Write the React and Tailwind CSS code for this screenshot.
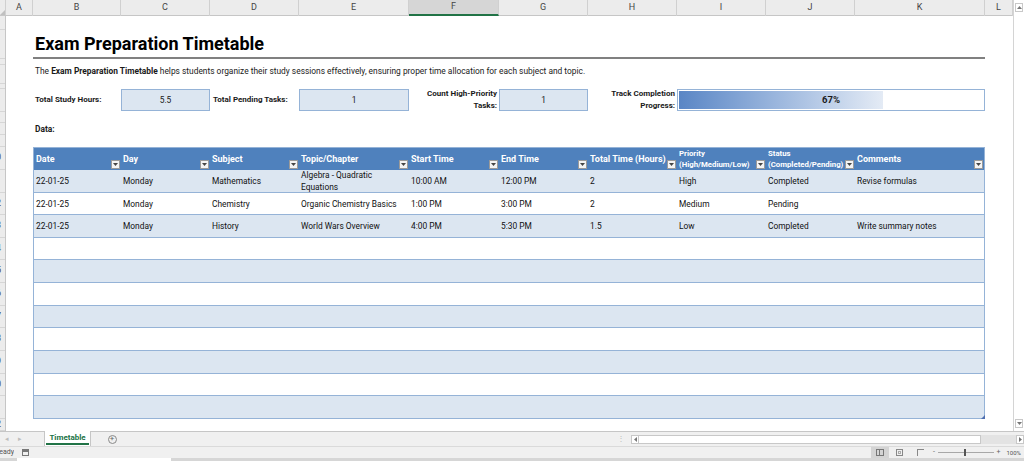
import React from "react";

const letters = ["A", "B", "C", "D", "E", "F", "G", "H", "I", "J", "K", "L"];

// row header heights (rows 1..22), written out so tailwind sees them
const rowHeights = [
  "h-[14px]", "h-[29px]", "h-[6px]", "h-[19px]", "h-[5px]", "h-[23px]", "h-[11px]", "h-[12px]", "h-[12px]",
  "h-[23px]",
  "h-[23px]", "h-[22px]", "h-[23px]", "h-[22px]", "h-[23px]", "h-[23px]", "h-[22px]", "h-[23px]", "h-[23px]", "h-[22px]", "h-[23px]",
  "h-[12px]",
];

const dataRowHeights = [
  "h-[23px]", "h-[22px]", "h-[23px]", "h-[22px]", "h-[23px]", "h-[23px]", "h-[22px]", "h-[23px]", "h-[23px]", "h-[22px]", "h-[23px]",
];

const headers = [
  ["Date"],
  ["Day"],
  ["Subject"],
  ["Topic/Chapter"],
  ["Start Time"],
  ["End Time"],
  ["Total Time (Hours)"],
  ["Priority", "(High/Medium/Low)"],
  ["Status", "(Completed/Pending)"],
  ["Comments"],
];

const rows = [
  ["22-01-25", "Monday", "Mathematics", "Algebra - Quadratic\nEquations", "10:00 AM", "12:00 PM", "2", "High", "Completed", "Revise formulas"],
  ["22-01-25", "Monday", "Chemistry", "Organic Chemistry Basics", "1:00 PM", "3:00 PM", "2", "Medium", "Pending", ""],
  ["22-01-25", "Monday", "History", "World Wars Overview", "4:00 PM", "5:30 PM", "1.5", "Low", "Completed", "Write summary notes"],
];

const tableCols = "grid grid-cols-[87px_89px_89px_110px_90px_89px_89px_89px_89px_129px]";

function FilterBtn() {
  return (
    <div className="w-[9px] h-[9px] shrink-0 self-end mb-[1px] mr-[1px] bg-[#f4f4f4] border border-[#9a9a9a] flex items-center justify-center">
      <svg width="5" height="3" viewBox="0 0 5 3">
        <path d="M0 0 L5 0 L2.5 3 Z" fill="#444" />
      </svg>
    </div>
  );
}

function StatBox({ value }) {
  return (
    <div className="h-[22px] bg-[#dce6f1] border border-[#95b3d7] flex items-center justify-center text-[8.4px]">
      {value}
    </div>
  );
}

export default function App() {
  return (
    <div
      className="w-[1024px] h-[461px] overflow-hidden bg-white flex flex-col text-[#1a1a1a]"
      style={{ fontFamily: "Roboto, 'Liberation Sans', sans-serif" }}
    >
      {/* sheet area */}
      <div className="flex h-[431px]">
        <div className="w-[1013px] flex flex-col">
          {/* column headers */}
          <div className="flex h-[16px] bg-[#ececec] border-b border-[#c6c6c6]">
            <div className="w-[6px] shrink-0 border-r border-[#d0d0d0] flex items-end justify-end">
              <svg width="5" height="5" viewBox="0 0 5 5">
                <path d="M5 0 L5 5 L0 5 Z" fill="#c0c0c0" />
              </svg>
            </div>
            <div className="grid grid-cols-[27px_88px_89px_89px_110px_90px_89px_89px_89px_89px_130px_28px] text-[9px] text-[#444]">
              {letters.map((l) => (
                <div
                  key={l}
                  className={
                    l === "F"
                      ? "flex items-center justify-center border-r border-[#d0d0d0] bg-[#d6d6d6] border-b-2 border-b-[#217346]"
                      : "flex items-center justify-center border-r border-[#d0d0d0]"
                  }
                >
                  {l}
                </div>
              ))}
            </div>
          </div>

          <div className="flex flex-1 min-h-0">
            {/* row headers (mostly scrolled out of view) */}
            <div className="w-[6px] shrink-0 bg-[#ececec] border-r border-[#c6c6c6] flex flex-col overflow-hidden text-[9px] text-[#444]">
              {rowHeights.map((h, i) => (
                <div key={i} className={h + " shrink-0 flex justify-end overflow-hidden border-b border-[#d6d6d6]"}>
                  <div className="w-[18px] shrink-0 flex items-center justify-center">{i + 1}</div>
                </div>
              ))}
            </div>

            {/* sheet content */}
            <div className="w-[1007px] pl-[27px] flex flex-col text-[8.4px]">
              <div className="h-[14px] shrink-0" />
              <div className="h-[29px] w-[952px] shrink-0 border-b-2 border-[#808080] flex items-center pl-[2px] text-[18px] font-bold text-black">
                Exam Preparation Timetable
              </div>
              <div className="h-[6px] shrink-0" />
              <div className="h-[19px] shrink-0 pt-[1px] pl-[2px] leading-[10px]">
                The <span className="font-bold">Exam Preparation Timetable</span> helps students organize their study sessions effectively, ensuring proper time allocation for each subject and topic.
              </div>
              <div className="h-[5px] shrink-0" />

              {/* stats */}
              <div className="h-[23px] shrink-0 grid grid-cols-[88px_89px_89px_110px_90px_89px_89px_308px] items-start text-[8px]">
                <div className="h-[22px] flex items-center pl-[2px] font-bold">Total Study Hours:</div>
                <StatBox value="5.5" />
                <div className="h-[22px] flex items-center pl-[3px] font-bold">Total Pending Tasks:</div>
                <StatBox value="1" />
                <div className="h-[22px] flex items-center justify-end pr-[2px] text-right font-bold leading-[12px]">
                  Count High-Priority
                  <br />
                  Tasks:
                </div>
                <StatBox value="1" />
                <div className="h-[22px] flex items-center justify-end pr-[2px] text-right font-bold leading-[12px]">
                  Track Completion
                  <br />
                  Progress:
                </div>
                <div className="h-[22px] border border-[#95b3d7] grid">
                  <div className="col-start-1 row-start-1 flex p-[1px]">
                    <div className="w-[67%] h-full bg-linear-to-r from-[#5a86c5] to-[#e4ebf5]" />
                  </div>
                  <div className="col-start-1 row-start-1 flex items-center justify-center font-bold text-[9.5px] text-[#1a1a1a]">
                    67%
                  </div>
                </div>
              </div>

              <div className="h-[11px] shrink-0" />
              <div className="h-[12px] shrink-0 flex items-center pl-[2px] font-bold">Data:</div>
              <div className="h-[12px] shrink-0" />

              {/* table */}
              <div className="w-[952px] shrink-0 border-x border-[#95b3d7]">
                <div className={tableCols + " h-[23px] bg-[#4f81bd] text-white font-bold border-t border-[#95b3d7]"}>
                  {headers.map((h, i) => (
                    <div key={i} className="flex">
                      <div
                        className={
                          h.length > 1
                            ? "flex-1 min-w-0 flex flex-col justify-center pl-[2px] leading-[11px] whitespace-nowrap text-[7.8px]"
                            : "flex-1 min-w-0 flex flex-col justify-center pl-[2px] leading-[11px] whitespace-nowrap text-[9px]"
                        }
                      >
                        {h.map((t, j) => (
                          <div key={j}>{t}</div>
                        ))}
                      </div>
                      <FilterBtn />
                    </div>
                  ))}
                </div>
                {dataRowHeights.map((h, r) => {
                  const row = rows[r] || ["", "", "", "", "", "", "", "", "", ""];
                  return (
                    <div
                      key={r}
                      className={
                        tableCols +
                        " " +
                        h +
                        " border-b border-[#95b3d7] " +
                        (r % 2 === 0 ? "bg-[#dce6f1]" : "bg-white")
                      }
                    >
                      {row.map((c, i) => (
                        <div key={i} className="flex items-center pl-[2px] pr-[2px] leading-[12px] whitespace-pre-line overflow-hidden text-[#111]">
                          {c}
                        </div>
                      ))}
                    </div>
                  );
                })}
              </div>
              <div className="w-[952px] flex justify-end">
                <svg width="4" height="4" viewBox="0 0 4 4" className="-mt-[4px]">
                  <path d="M4 0 L4 4 L0 4 Z" fill="#4f6fb0" />
                </svg>
              </div>
            </div>
          </div>
        </div>

        {/* vertical scrollbar */}
        <div className="w-[11px] bg-white border-l border-[#d4d4d4] flex flex-col justify-between items-center py-[3px]">
          <div className="w-[8px] h-[9px] border border-[#c8c8c8] flex items-center justify-center">
            <svg width="5" height="3" viewBox="0 0 5 3">
              <path d="M0 3 L5 3 L2.5 0 Z" fill="#777" />
            </svg>
          </div>
          <div className="w-[8px] h-[9px] border border-[#c8c8c8] flex items-center justify-center">
            <svg width="5" height="3" viewBox="0 0 5 3">
              <path d="M0 0 L5 0 L2.5 3 Z" fill="#777" />
            </svg>
          </div>
        </div>
      </div>

      {/* sheet tabs */}
      <div className="h-[15px] shrink-0 bg-[#f0f0f0] border-t border-[#c6c6c6] flex items-stretch text-[8px]">
        <div className="w-[44px] flex items-center gap-[9px] pl-[5px] text-[#bdbdbd] text-[7px]">
          <span>◂</span>
          <span>▸</span>
        </div>
        <div className="w-[47px] bg-white border-x border-[#c6c6c6] -mt-[1px] flex flex-col items-center justify-center">
          <span className="font-bold text-[#217346] border-b-2 border-[#217346] px-[3px] leading-[10px]">Timetable</span>
        </div>
        <div className="w-[42px] flex items-center justify-center">
          <div className="w-[9px] h-[9px] rounded-full border border-[#8a8a8a] flex items-center justify-center text-[8px] leading-none text-[#666]">
            +
          </div>
        </div>
        <div className="flex-1 flex items-center justify-end text-[#bdbdbd] pr-[6px]">⋮</div>
        <div className="w-[393px] flex items-center py-[2px]">
          <div className="w-[8px] h-[9px] bg-white border border-[#c8c8c8] flex items-center justify-center">
            <svg width="3" height="5" viewBox="0 0 3 5">
              <path d="M3 0 L3 5 L0 2.5 Z" fill="#777" />
            </svg>
          </div>
          <div className="w-[342px] h-[9px] bg-white border-y border-r border-[#c8c8c8]" />
          <div className="flex-1 h-[9px] bg-[#e3e3e3]" />
          <div className="w-[8px] h-[9px] bg-white border border-[#c8c8c8] flex items-center justify-center">
            <svg width="3" height="5" viewBox="0 0 3 5">
              <path d="M0 0 L0 5 L3 2.5 Z" fill="#777" />
            </svg>
          </div>
        </div>
      </div>

      {/* status bar */}
      <div className="h-[12px] shrink-0 bg-[#f0f0f0] border-t border-[#dadada] flex items-center text-[7px] text-[#555]">
        <div className="w-[14px] overflow-hidden flex justify-end">
          <span className="shrink-0">Ready</span>
        </div>
        <div className="ml-[8px] w-[7px] h-[7px] border border-[#777] flex flex-col">
          <div className="h-[2px] bg-[#777]" />
        </div>
        <div className="flex-1" />
        <div className="w-[18px] h-[12px] bg-[#d4d4d4] flex items-center justify-center">
          <div className="w-[8px] h-[7px] border border-[#777] grid grid-cols-2">
            <div className="border-r border-[#777]" />
            <div />
          </div>
        </div>
        <div className="w-[21px] flex items-center justify-center">
          <div className="w-[7px] h-[7px] border border-[#888] p-[1px]">
            <div className="w-full h-full border border-[#aaa]" />
          </div>
        </div>
        <div className="w-[21px] flex items-center justify-center">
          <div className="w-[7px] h-[7px] border border-[#888] border-r-0 border-b-0" />
        </div>
        <div className="w-[6px] text-center text-[#666]">-</div>
        <div className="w-[58px] flex items-center px-[1px]">
          <div className="flex-1 h-px bg-[#a8a8a8]" />
          <div className="w-[2px] h-[7px] bg-[#555]" />
          <div className="w-[28px] h-px bg-[#a8a8a8]" />
        </div>
        <div className="w-[7px] text-center text-[#666]">+</div>
        <div className="w-[22px] text-right pr-[3px] text-[6px]">100%</div>
      </div>

      <div className="h-[3px] shrink-0 bg-[#d6d6d6] flex">
        <div className="w-[17px]" />
        <div className="w-[154px] bg-white" />
      </div>
    </div>
  );
}
